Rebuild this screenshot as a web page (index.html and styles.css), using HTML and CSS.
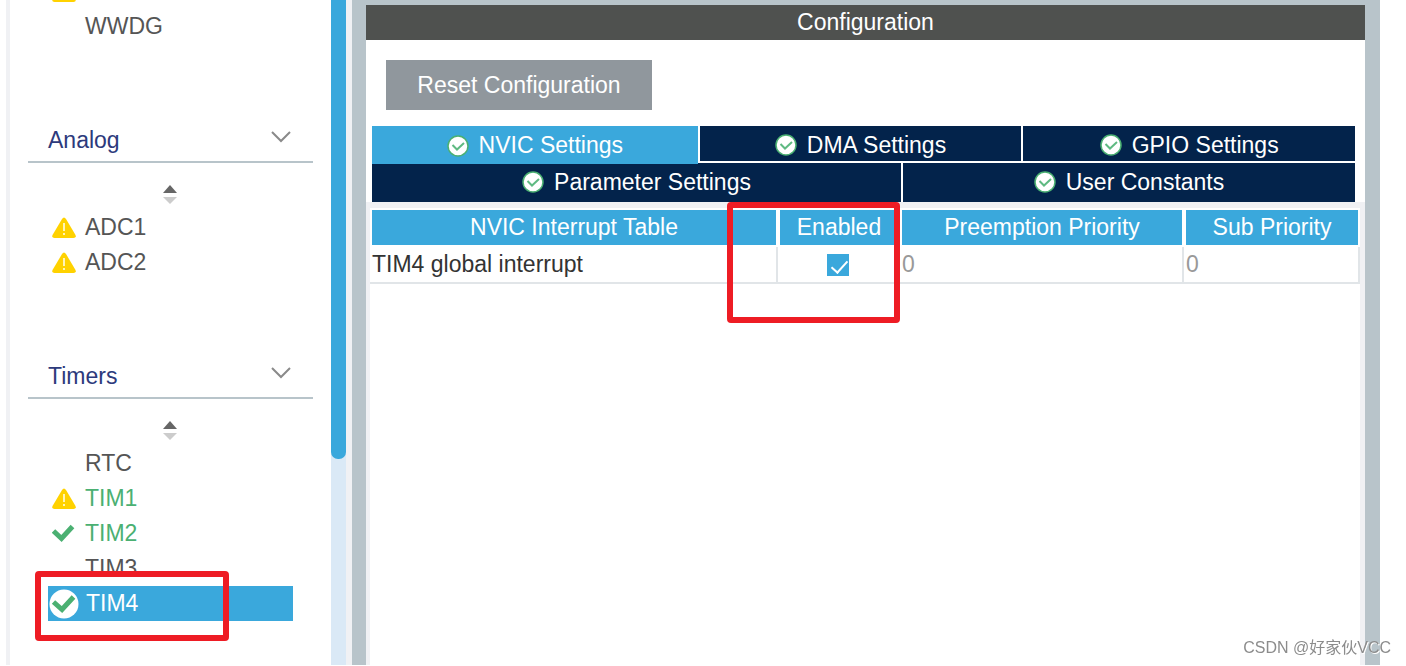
FILE: index.html
```html
<!DOCTYPE html>
<html lang="en">
<head>
<meta charset="UTF-8">
<title>TIM4 Configuration</title>
<link rel="stylesheet" href="styles.css">
</head>
<body>
  <!-- shared icons -->
  <svg class="defs" width="0" height="0">
    <symbol id="warn" viewBox="0 0 24 21">
      <path d="M10 2Q12-1 14 2L23.500 18Q24.500 21 21.500 21H2.500Q-.5 21 .5 18Z" fill="#ffd200"/>
      <path d="M12 6v8M12 16v2" stroke="#fff3b8" stroke-width="2"/>
    </symbol>
    <symbol id="tick" viewBox="0 0 24 21">
      <path d="M1.500 8L9.500 15.500L20.500 3.500" fill="none" stroke="#4bb072" stroke-width="5"/>
    </symbol>
    <symbol id="round" viewBox="0 0 22 22">
      <circle cx="11" cy="11" r="10" fill="#fff" stroke="#4bb072" stroke-width="1.500"/>
      <path d="M5.500 10L10 14.500L17 8" fill="none" stroke="#5fba82" stroke-width="2"/>
    </symbol>
    <symbol id="chevron" viewBox="0 0 20 12">
      <path d="M1 1L10 10L19 1" fill="none" stroke="#8a8a8a" stroke-width="2"/>
    </symbol>
    <symbol id="sort" viewBox="0 0 16 20">
      <path d="M8 0L15 8H1Z" fill="#666"/>
      <path d="M1 12H15L8 19Z" fill="#ccc"/>
    </symbol>
  </svg>

  <nav class="sidebar">
    <div class="categories">
      <ul class="list first">
        <li><svg class="icon"><use href="#warn"/></svg></li>
        <li><a href="#wwdg">WWDG</a></li>
      </ul>

      <button class="group">Analog <svg class="chevron"><use href="#chevron"/></svg></button>
      <button class="sort" aria-label="Sort Analog"><svg><use href="#sort"/></svg></button>
      <ul class="list">
        <li><svg class="icon"><use href="#warn"/></svg><a href="#adc1">ADC1</a></li>
        <li><svg class="icon"><use href="#warn"/></svg><a href="#adc2">ADC2</a></li>
      </ul>

      <button class="group">Timers <svg class="chevron"><use href="#chevron"/></svg></button>
      <button class="sort" aria-label="Sort Timers"><svg><use href="#sort"/></svg></button>
      <ul class="list last">
        <li><a href="#rtc">RTC</a></li>
        <li class="on"><svg class="icon"><use href="#warn"/></svg><a href="#tim1">TIM1</a></li>
        <li class="on"><svg class="icon"><use href="#tick"/></svg><a href="#tim2">TIM2</a></li>
        <li><a href="#tim3">TIM3</a></li>
        <li class="selected">
          <svg class="badge" viewBox="0 0 30 30">
            <circle cx="15" cy="15" r="14.500" fill="#fff"/>
            <path d="M4.500 13L13 20.500L24.500 8" fill="none" stroke="#4bb072" stroke-width="5"/>
          </svg>
          <a href="#tim4">TIM4</a>
          <span class="mark mark-timer"></span>
        </li>
      </ul>
    </div>
    <div class="scrollbar"><div class="thumb"></div></div>
  </nav>

  <main class="frame">
    <div class="panel">
      <h1 class="title">Configuration</h1>
      <div class="toolbar">
        <button class="reset">Reset Configuration</button>
      </div>

      <div class="tabs">
        <div class="tab-row upper">
          <button class="tab active"><svg><use href="#round"/></svg>NVIC Settings</button>
          <button class="tab"><svg><use href="#round"/></svg>DMA Settings</button>
          <button class="tab"><svg><use href="#round"/></svg>GPIO Settings</button>
        </div>
        <div class="tab-row lower">
          <button class="tab"><svg><use href="#round"/></svg>Parameter Settings</button>
          <button class="tab"><svg><use href="#round"/></svg>User Constants</button>
        </div>
      </div>

      <div class="content">
        <table>
          <thead>
            <tr>
              <th>NVIC Interrupt Table</th>
              <th class="enabled">Enabled<span class="mark mark-enabled"></span></th>
              <th class="preemption">Preemption Priority</th>
              <th class="sub">Sub Priority</th>
            </tr>
          </thead>
          <tbody>
            <tr>
              <td><label for="tim4irq">TIM4 global interrupt</label></td>
              <td class="check"><input type="checkbox" id="tim4irq" checked></td>
              <td class="dim">0</td>
              <td class="dim">0</td>
            </tr>
          </tbody>
        </table>
      </div>
    </div>
  </main>

  <div class="watermark">CSDN @好家伙VCC</div>
</body>
</html>
```

FILE: styles.css
```css
* {
  box-sizing: border-box;
}
body {
  margin: 0;
  min-height: 100vh;
  display: flex;
  padding: 0 26px 1px 6px;
  background: #fff;
  color: #555;
  font: 23px/35px "Liberation Sans", "Noto Sans CJK SC", sans-serif;
}
button {
  border: 0;
  padding: 0;
  background: none;
  font: inherit;
  cursor: pointer;
}
a {
  color: inherit;
  text-decoration: none;
}
.defs {
  position: absolute;
}

/* left side */
.sidebar {
  display: flex;
  flex: none;
  width: 346px;
  border-left: 4px solid #f0f1f4;
  border-right: 6px solid #f0f1f4;
}
.categories {
  flex: 1;
  padding: 0 18px;
  overflow: hidden;
}
.list {
  list-style: none;
  margin: 0 20px 81px;
  padding: 0;
}
.first {
  margin-top: -26px;
}
.last {
  margin-bottom: 24px;
}
.list li {
  position: relative;
  display: flex;
  align-items: center;
  height: 35px;
  padding-left: 37px;
}
.icon {
  width: 24px;
  height: 21px;
  margin-left: -33px;
  margin-right: 9px;
}
.list .on {
  color: #4bb072;
}
.list .selected {
  padding-left: 1px;
  gap: 7px;
  background: #3aa8dc;
  color: #fff;
}
.badge {
  width: 30px;
  height: 30px;
}
.group {
  display: flex;
  justify-content: space-between;
  width: 100%;
  height: 38px;
  padding: 0 22px 0 20px;
  border-bottom: 2px solid #b8c4ca;
  color: #2d3a7c;
  line-height: 30px;
}
.chevron {
  width: 20px;
  height: 12px;
  margin-top: 6px;
}
.sort {
  display: block;
  width: 100%;
  height: 47px;
  padding: 16px 2px 0 0;
  line-height: 0;
}
.sort svg {
  width: 16px;
  height: 20px;
}
.scrollbar {
  width: 15px;
  background: #dae9f6;
}
.thumb {
  height: 459px;
  border-radius: 0 0 7px 7px;
  background: #3aa8dc;
}

/* right side */
.frame {
  flex: 1;
  display: flex;
  padding: 5px 15px 0 14px;
  background: #b8c4ca;
}
.panel {
  flex: 1;
  display: flex;
  flex-direction: column;
  background: #fff;
}
.title {
  margin: 0;
  background: #4f514f;
  color: #fff;
  font-size: 23px;
  font-weight: normal;
  text-align: center;
}
.toolbar {
  padding: 20px 20px 16px;
}
.reset {
  display: block;
  width: 266px;
  height: 50px;
  background: #90979d;
  color: #fff;
}
.tabs {
  padding: 0 10px 0 6px;
}
.tab-row {
  display: grid;
  column-gap: 2px;
}
.upper {
  grid-template-columns: 326fr 322fr 332fr;
  margin-bottom: 2px;
}
.lower {
  grid-template-columns: 529fr 452fr;
}
.tab {
  display: flex;
  align-items: center;
  justify-content: center;
  gap: 10px;
  height: 35px;
  padding-top: 3px;
  background: #03234b;
  color: #fff;
}
.lower .tab {
  height: 39px;
  padding: 0 0 1px;
}
.tab svg {
  width: 22px;
  height: 22px;
}
.tab.active {
  position: relative;
  height: 38px;
  margin-bottom: -3px;
  padding: 1px 0 0;
  background: #3aa8dc;
}
.content {
  flex: 1;
  padding: 6px 5px 0 4px;
  background: linear-gradient(#fff, #fff) 4px 6px / calc(100% - 9px) 100% no-repeat #f0f1f4;
}
table {
  width: 100%;
  table-layout: fixed;
  border-spacing: 0;
}
th {
  position: relative;
  padding: 0;
  border: 2px solid #fff;
  background: #3aa8dc;
  color: #fff;
  font-weight: normal;
}
.enabled {
  width: 122px;
}
.preemption {
  width: 284px;
}
.sub {
  width: 176px;
}
td {
  height: 37px;
  padding: 0 2px;
  border-right: 2px solid #e1e5e8;
  border-bottom: 2px solid #e1e5e8;
  color: #333;
}
.dim {
  color: #999;
}
.check {
  text-align: center;
  line-height: 0;
}
.check input {
  appearance: none;
  position: relative;
  width: 22px;
  height: 22px;
  margin: 0;
  background: #3aa8dc;
}
.check input:checked::after {
  content: "";
  position: absolute;
  left: 8px;
  top: 3px;
  width: 7px;
  height: 14px;
  border: solid #fff;
  border-width: 0 2px 2px 0;
  transform: rotate(42deg);
}

/* red highlight boxes */
.mark {
  position: absolute;
  z-index: 2;
  border: 6px solid #ee1c24;
  border-radius: 4px;
  pointer-events: none;
}
.mark-timer {
  left: -13px;
  top: -15px;
  width: 194px;
  height: 70px;
}
.mark-enabled {
  left: -53px;
  top: -8px;
  width: 173px;
  height: 121px;
}
.watermark {
  position: fixed;
  right: 15px;
  bottom: 6px;
  color: #8c8c8c;
  font-size: 16px;
  line-height: 24px;
  text-shadow: 1px 1px 0 #fff;
}
```
